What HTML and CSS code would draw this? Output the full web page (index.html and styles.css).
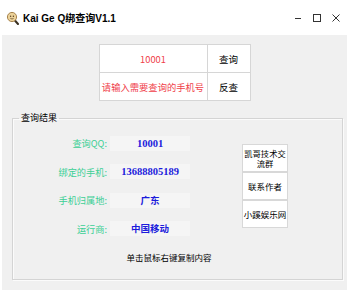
FILE: index.html
```html
<!DOCTYPE html>
<html lang="zh-CN">
<head>
    <meta charset="UTF-8">
    <meta name="viewport" content="width=device-width, initial-scale=1.0">
    <title>Kai Ge Q绑查询V1.1</title>
    <link rel="stylesheet" href="styles.css">
</head>
<body>
    <div class="window">
        <div class="titlebar">
            <svg class="app-icon" width="13" height="14" viewBox="0 0 13 14">
                <line x1="8.5" y1="9" x2="12" y2="13" stroke="#3a3020" stroke-width="2" stroke-linecap="round"/>
                <circle cx="6" cy="6" r="4.6" fill="#ecd29a" stroke="#a8844e" stroke-width="1"/>
                <circle cx="4.6" cy="5.2" r="0.7" fill="#5a4020"/>
                <circle cx="7.4" cy="5.2" r="0.7" fill="#5a4020"/>
                <path d="M4.4 7.4 Q6 8.6 7.6 7.4" fill="none" stroke="#5a4020" stroke-width="0.7"/>
            </svg>
            <span class="title">Kai Ge Q绑查询V1.1</span>
            <div class="controls">
                <svg width="10" height="10" viewBox="0 0 10 10"><line x1="2" y1="5.5" x2="8" y2="5.5" stroke="#333" stroke-width="1"/></svg>
                <svg width="10" height="10" viewBox="0 0 10 10"><rect x="1.5" y="1.5" width="7" height="7" fill="none" stroke="#333" stroke-width="1"/></svg>
                <svg width="10" height="10" viewBox="0 0 10 10"><path d="M1.5 1.5 L8.5 8.5 M8.5 1.5 L1.5 8.5" stroke="#333" stroke-width="1"/></svg>
            </div>
        </div>

        <div class="client">
            <div class="query">
                <div class="cell field">10001</div>
                <button class="cell">查询</button>
                <div class="cell field">请输入需要查询的手机号</div>
                <button class="cell">反查</button>
            </div>

            <fieldset class="result">
                <legend>查询结果</legend>
                <div class="result-body">
                    <div class="info">
                        <span class="label">查询QQ:</span>
                        <span class="value num">10001</span>
                        <span class="label">绑定的手机:</span>
                        <span class="value num">13688805189</span>
                        <span class="label">手机归属地:</span>
                        <span class="value">广东</span>
                        <span class="label">运行商:</span>
                        <span class="value">中国移动</span>
                    </div>
                    <div class="links">
                        <button class="link">凯哥技术交流群</button>
                        <button class="link single">联系作者</button>
                        <button class="link single">小蹊娱乐网</button>
                    </div>
                </div>
                <p class="hint">单击鼠标右键复制内容</p>
            </fieldset>
        </div>
    </div>
</body>
</html>
```

FILE: styles.css
```css
body {
    margin: 0;
    background-color: #ffffff;
    font-family: "Noto Sans CJK SC", sans-serif;
    color: #000000;
}

.window {
    width: 350px;
    height: 300px;
    display: flex;
    flex-direction: column;
}

.titlebar {
    height: 35px;
    display: flex;
    align-items: center;
    padding: 0 9px 0 6px;
    box-sizing: border-box;
}

.app-icon {
    margin-right: 4px;
    margin-top: 1px;
}

.title {
    font-family: "Liberation Sans", "Noto Sans CJK SC", sans-serif;
    font-weight: bold;
    font-size: 10px;
}

.controls {
    margin-left: auto;
    display: flex;
    gap: 9px;
    margin-top: 1px;
}

.client {
    flex: 1;
    margin: 0 3px 10px 2px;
    padding-top: 9px;
    background-color: #f0f0f0;
    display: flex;
    flex-direction: column;
}

.query {
    align-self: center;
    display: grid;
    grid-template-columns: 107px 42px;
    grid-auto-rows: 27px;
    gap: 1px;
    border: 1px solid #d6d6d6;
    background-color: #d6d6d6;
}

.cell {
    display: flex;
    align-items: center;
    justify-content: center;
    background-color: #ffffff;
    border: none;
    padding: 0;
    font-family: "Noto Sans CJK SC", sans-serif;
    font-size: 9.5px;
    color: #000000;
}

.field {
    color: #f0404a;
    white-space: nowrap;
    font-size: 9.3px;
}

.result {
    margin: 9px 0 0 10px;
    width: 331px;
    box-sizing: border-box;
    padding: 0 0 14px 0;
    border: 1px solid #d4d4d4;
    box-shadow: inset 1px 1px 0 #fbfbfb, 1px 1px 0 #fbfbfb;
}

.result legend {
    margin-left: 6px;
    padding: 0 2px;
    font-size: 9px;
    line-height: 16px;
}

.result-body {
    display: flex;
    align-items: flex-start;
    margin-top: 3px;
}

.info {
    display: grid;
    grid-template-columns: 94px 80px;
    grid-auto-rows: 28.5px;
    column-gap: 3px;
    align-items: center;
}

.label {
    text-align: right;
    font-size: 9.2px;
    color: #3ccf95;
}

.value {
    height: 15px;
    line-height: 15px;
    text-align: center;
    background-color: #f5f5f5;
    color: #1c1cdc;
    font-weight: bold;
    font-size: 9.5px;
}

.value.num {
    font-family: "Liberation Serif", serif;
    font-size: 10.5px;
}

.links {
    display: flex;
    flex-direction: column;
    margin: 15px 0 0 52px;
}

.link {
    width: 46px;
    height: 28px;
    box-sizing: border-box;
    padding: 0;
    background-color: #ffffff;
    border: 1px solid #d8d8d8;
    font-family: "Noto Sans CJK SC", sans-serif;
    font-size: 8.3px;
    line-height: 10px;
    color: #000000;
}

.link.single {
    white-space: nowrap;
    font-size: 8.5px;
}

.hint {
    margin: 6px 0 0;
    padding-right: 17px;
    text-align: center;
    font-size: 8.5px;
    line-height: 16px;
}
```
